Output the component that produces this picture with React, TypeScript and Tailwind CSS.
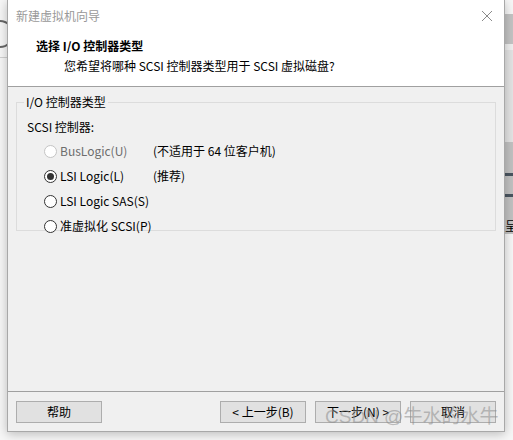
import React from "react";

type Option = {
  label: string;
  note?: string;
  checked?: boolean;
  disabled?: boolean;
};

const options: Option[] = [
  { label: "BusLogic(U)", note: "(不适用于 64 位客户机)", disabled: true },
  { label: "LSI Logic(L)", note: "(推荐)", checked: true },
  { label: "LSI Logic SAS(S)" },
  { label: "准虚拟化 SCSI(P)" },
];

function Radio({ checked, disabled }: { checked?: boolean; disabled?: boolean }) {
  return (
    <span
      className={
        "flex h-[13px] w-[13px] shrink-0 items-center justify-center rounded-full border bg-white " +
        (disabled ? "border-[#c4c4c4] bg-[#f5f5f5]" : "border-[#333333]")
      }
    >
      {checked && <span className="h-[7px] w-[7px] rounded-full bg-[#333333]" />}
    </span>
  );
}

function Button({ children, className = "" }: { children: React.ReactNode; className?: string }) {
  return (
    <button
      className={
        "flex h-[22px] w-[86px] items-center justify-center border border-[#adadad] bg-[#e1e1e1] text-[12px] text-black " +
        className
      }
    >
      {children}
    </button>
  );
}

export default function App() {
  return (
    <div
      className="relative h-[440px] w-[513px] overflow-hidden bg-[#f7f7f7]"
      style={{ fontFamily: '"Microsoft YaHei", "Noto Sans CJK SC", sans-serif' }}
    >
      {/* bits of the desktop behind the dialog */}
      <div className="absolute left-[-14px] top-[20px] h-[28px] w-[28px] rounded-full border-2 border-[#666666]" />
      <div className="absolute left-0 top-[57px] h-px w-[8px] bg-[#d0d0d0]" />
      <div className="absolute right-0 top-[14px] flex h-[220px] w-[8px] flex-col">
        <div className="h-[30px] bg-[#c4c4c4]" />
        <div className="h-[6px] bg-[#f0f0f0]" />
        <div className="h-[92px] bg-[#e4e4e4]" />
        <div className="relative flex-1 bg-[#c2c2c2]">
          <div className="absolute left-0 right-0 top-[31px] h-[3px] bg-[#4a5560]" />
          <div className="absolute left-0 right-0 top-[52px] h-[3px] bg-[#4a5560]" />
          <span className="absolute left-0 top-[78px] text-[12px] leading-none text-black">呈</span>
        </div>
      </div>

      <div className="relative ml-[7px] flex h-[432px] w-[498px] flex-col border border-t-0 border-[#a8a8a8] bg-[#f0f0f0] text-[12px] text-black shadow-[0_2px_10px_rgba(0,0,0,0.25)]">
        <div className="flex h-[87px] flex-col border-b border-[#a0a0a0] bg-white">
          <div className="flex h-[31px] items-center justify-between pl-[8px] pr-[8px]">
            <span className="text-[12px] text-[#999999]">新建虚拟机向导</span>
            <svg width="12" height="12" viewBox="0 0 12 12" className="mr-[3px]">
              <path d="M1 1 L11 11 M11 1 L1 11" stroke="#8a8a8a" strokeWidth="1" />
            </svg>
          </div>
          <div className="pl-[28px] pt-[6px] text-[12px] font-bold leading-[18px]">选择 I/O 控制器类型</div>
          <div className="pl-[56px] pt-[2px] text-[12px] leading-[18px]">您希望将哪种 SCSI 控制器类型用于 SCSI 虚拟磁盘?</div>
        </div>

        <div className="flex-1 px-[8px] pt-[7px]">
          <fieldset className="h-[137px] border border-[#dcdcdc] pl-[10px]">
            <legend className="ml-[-3px] px-[2px] leading-[16px]">I/O 控制器类型</legend>
            <div className="mt-[9px] leading-[16px]">SCSI 控制器:</div>
            <div className="mt-[8px] flex flex-col gap-[9px] pl-[17px]">
              {options.map((o) => (
                <div key={o.label} className="flex h-[16px] items-center whitespace-nowrap">
                  <Radio checked={o.checked} disabled={o.disabled} />
                  <span className={"ml-[3px] min-w-[93px] " + (o.disabled ? "text-[#6d6d6d]" : "")}>{o.label}</span>
                  {o.note && <span>{o.note}</span>}
                </div>
              ))}
            </div>
          </fieldset>
        </div>

        <div className="flex h-[40px] items-start border-t border-[#a0a0a0] px-[8px] pt-[9px]">
          <Button>帮助</Button>
          <div className="ml-auto flex gap-[9px]">
            <Button>&lt; 上一步(B)</Button>
            <Button>下一步(N) &gt;</Button>
            <Button>取消</Button>
          </div>
        </div>

        <span
          className="pointer-events-none absolute bottom-[5px] left-[317px] whitespace-nowrap text-[19px] leading-none text-[rgba(140,140,140,0.55)]"
          style={{ fontFamily: '"Liberation Sans", "Noto Sans CJK SC", sans-serif' }}
        >
          CSDN @牛水的水牛
        </span>
      </div>
    </div>
  );
}
